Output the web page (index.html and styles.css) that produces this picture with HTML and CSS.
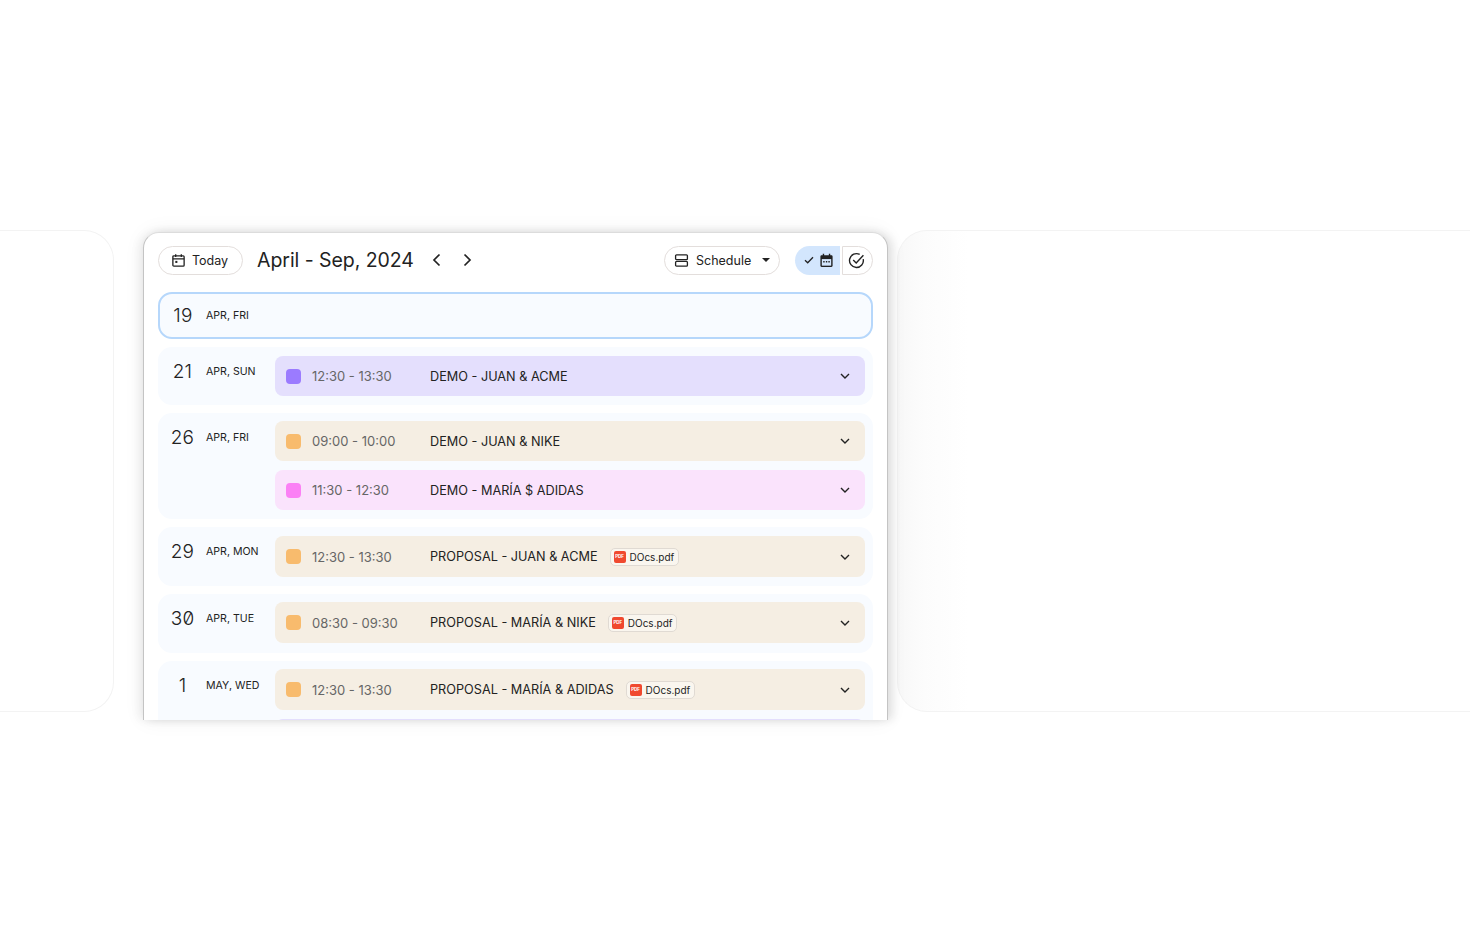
FILE: index.html
```html
<!DOCTYPE html>
<html lang="en">
<head>
<meta charset="utf-8">
<title>Schedule</title>
<link rel="stylesheet" href="styles.css">
</head>
<body>
<main class="stage">
  <div class="side side-left"></div>
  <section class="card">
    <header class="toolbar">
      <button class="pill today">
        <svg class="ico" viewBox="0 0 16 16" fill="none" stroke="#222" stroke-width="1.4"><rect x="2" y="3" width="12" height="11" rx="1"/><path d="M2 6.3h12M5 1.3v3M11 1.3v3"/><rect x="4.6" y="8.4" width="2.2" height="2.2" fill="#222" stroke="none"/></svg>
        Today
      </button>
      <h1 class="range">April - Sep, 2024</h1>
      <div class="nav">
        <svg viewBox="0 0 16 16" fill="none" stroke="#222" stroke-width="1.7"><path d="M10.5 2.5 5 8l5.5 5.5"/></svg>
        <svg viewBox="0 0 16 16" fill="none" stroke="#222" stroke-width="1.7"><path d="M5.5 2.5 11 8l-5.500 5.500"/></svg>
      </div>
      <button class="pill schedule">
        <svg class="ico" viewBox="0 0 16 16" fill="none" stroke="#222" stroke-width="1.4"><rect x="1.700" y="2" width="12.600" height="5" rx="1"/><rect x="1.700" y="9" width="12.600" height="5" rx="1"/></svg>
        Schedule
        <svg class="caret" viewBox="0 0 8 4"><path d="M0 0h8L4 4z" fill="#222"/></svg>
      </button>
      <div class="toggle">
        <span class="toggle-on">
          <svg class="tick" viewBox="0 0 10 8" fill="none" stroke="#222" stroke-width="1.300"><path d="M1 4.200 3.700 6.800 9 1.200"/></svg>
          <svg class="ico" viewBox="0 0 16 16"><path d="M4 .8h1.500v1.700h5V.8H12v1.700h1.200c.7 0 1.300.6 1.300 1.300v9.900c0 .7-.6 1.300-1.300 1.300H2.800c-.7 0-1.300-.6-1.300-1.300V3.800c0-.7.6-1.300 1.300-1.300H4z" fill="#222"/><rect x="3" y="6.500" width="10" height="7" fill="#d3e6fd"/><path d="M4.500 8.500h1.500V10H4.500zM7.300 8.500h1.500V10H7.300zM10 8.500h1.500V10H10z" fill="#222"/></svg>
        </span>
        <span class="toggle-off">
          <svg class="ico big" viewBox="0 0 16 16" fill="none" stroke="#222" stroke-width="1.300"><path d="M14.300 6.700A6.500 6.500 0 1 1 11 2.300"/><path d="M4.900 7.500 7.700 10.300 14.500 3"/></svg>
        </span>
      </div>
    </header>

    <div class="today-row">
      <span class="num">19</span><span class="lbl">APR, FRI</span>
    </div>

    <div class="day">
      <div class="date"><span class="num">21</span><span class="lbl">APR, SUN</span></div>
      <div class="events top9">
        <div class="event violet"><i class="dot"></i><span class="time">12:30 - 13:30</span><span class="name">DEMO - JUAN &amp; ACME</span><svg class="chev" viewBox="0 0 10 6" fill="none" stroke="#222" stroke-width="1.400"><path d="M1 1l4 4 4-4"/></svg></div>
      </div>
    </div>

    <div class="day">
      <div class="date"><span class="num">26</span><span class="lbl">APR, FRI</span></div>
      <div class="events">
        <div class="event sand"><i class="dot"></i><span class="time">09:00 - 10:00</span><span class="name">DEMO - JUAN &amp; NIKE</span><svg class="chev" viewBox="0 0 10 6" fill="none" stroke="#222" stroke-width="1.400"><path d="M1 1l4 4 4-4"/></svg></div>
        <div class="event pink"><i class="dot"></i><span class="time">11:30 - 12:30</span><span class="name">DEMO - MARÍA $ ADIDAS</span><svg class="chev" viewBox="0 0 10 6" fill="none" stroke="#222" stroke-width="1.400"><path d="M1 1l4 4 4-4"/></svg></div>
      </div>
    </div>

    <div class="day">
      <div class="date"><span class="num">29</span><span class="lbl">APR, MON</span></div>
      <div class="events top9">
        <div class="event sand tall"><i class="dot"></i><span class="time">12:30 - 13:30</span><span class="name">PROPOSAL - JUAN &amp; ACME</span><span class="doc"><b class="pdf">PDF</b>DOcs.pdf</span><svg class="chev" viewBox="0 0 10 6" fill="none" stroke="#222" stroke-width="1.400"><path d="M1 1l4 4 4-4"/></svg></div>
      </div>
    </div>

    <div class="day">
      <div class="date"><span class="num zero">30</span><span class="lbl">APR, TUE</span></div>
      <div class="events bottom10">
        <div class="event sand tall"><i class="dot"></i><span class="time">08:30 - 09:30</span><span class="name">PROPOSAL - MARÍA &amp; NIKE</span><span class="doc"><b class="pdf">PDF</b>DOcs.pdf</span><svg class="chev" viewBox="0 0 10 6" fill="none" stroke="#222" stroke-width="1.400"><path d="M1 1l4 4 4-4"/></svg></div>
      </div>
    </div>

    <div class="day">
      <div class="date"><span class="num">1</span><span class="lbl">MAY, WED</span></div>
      <div class="events">
        <div class="event sand tall"><i class="dot"></i><span class="time">12:30 - 13:30</span><span class="name">PROPOSAL - MARÍA &amp; ADIDAS</span><span class="doc"><b class="pdf">PDF</b>DOcs.pdf</span><svg class="chev" viewBox="0 0 10 6" fill="none" stroke="#222" stroke-width="1.400"><path d="M1 1l4 4 4-4"/></svg></div>
        <div class="event violet"></div>
      </div>
    </div>
  </section>
  <div class="side side-right"></div>
</main>
</body>
</html>
```

FILE: styles.css
```css
html, body { margin: 0; padding: 0; background: #fff; overflow: hidden; height: 100%; }
body { font-family: "Inter", "Liberation Sans", sans-serif; color: #222; }
.stage { display: flex; align-items: flex-start; margin: 230px -40px 0 -40px; height: 490px; }
.side { height: 482px; background: #fff; border: 1px solid #f3f3f3; box-sizing: border-box; flex: none; }
.side-left { width: 154px; border-radius: 0 30px 30px 0; border-left: 0; }
.side-right { flex: 1; margin-left: 9px; border-radius: 30px 0 0 30px; border-right: 0; background: linear-gradient(90deg, #f8f8f8, #fcfcfc 26px, #fff 70px); }
.card { flex: none; width: 745px; height: 488px; margin: 2px 0 0 29px; box-sizing: border-box; padding: 0 14px; background: #fff; border: 1px solid #c4c4c4; border-top-color: #dcdcdc; border-bottom: 0; border-radius: 16px 16px 0 0; overflow: hidden; box-shadow: 0 0 22px rgba(0, 0, 0, .06), 5px 0 9px rgba(0, 0, 0, .09), -4px 0 10px rgba(0, 0, 0, .06); position: relative; z-index: 1; }

.toolbar { display: flex; align-items: center; height: 28px; margin-top: 13px; margin-bottom: 18px; }
.pill { display: flex; align-items: center; height: 29px; box-sizing: border-box; background: #fff; border: 1px solid #e3dedc; border-radius: 15px; font: 400 12.500px "Inter", sans-serif; color: #222; padding: 0; }
.ico { width: 15px; height: 15px; flex: none; }
.today { width: 85px; padding-left: 12px; gap: 6px; }
.range { margin: 0 0 0 14px; font-size: 19.500px; font-weight: 400; letter-spacing: -.05px; color: #222; white-space: nowrap; }
.nav { display: flex; gap: 14px; margin-left: 15px; }
.nav svg { width: 16px; height: 16px; }
.schedule { width: 116px; margin-left: auto; padding-left: 9px; gap: 7px; }
.caret { width: 8px; height: 4px; margin-left: 4px; }
.toggle { display: flex; height: 29px; margin-left: 15px; }
.toggle-on { display: flex; align-items: center; width: 45px; box-sizing: border-box; padding-left: 9px; gap: 5px; background: #d3e6fd; border-radius: 15px 0 0 15px; }
.tick { width: 10px; height: 8px; flex: none; }
.toggle-off { display: flex; align-items: center; width: 31px; margin-left: 2px; padding-left: 5px; box-sizing: border-box; border: 1px solid #e3dedc; border-radius: 0 15px 15px 0; }
.big { width: 17px; height: 17px; }

.num { display: block; width: 48px; text-align: center; font-size: 19px; font-weight: 300; letter-spacing: .2px; line-height: 22px; color: #222; flex: none; }
.zero { font-feature-settings: "zero"; }
.lbl { font-size: 10.600px; line-height: 22px; color: #222; white-space: nowrap; }

.today-row { display: flex; align-items: center; height: 47px; box-sizing: border-box; border: 2px solid #b6d7fb; border-radius: 14px; background: #f8fbff; margin-bottom: 8px; }
.today-row .num { margin-left: -1px; }
.today-row .lbl { margin-left: -1px; }
.day { display: flex; background: #f8fbff; border-radius: 14px; padding-right: 8px; margin-bottom: 8px; }
.date { display: flex; width: 117px; flex: none; padding-top: 14px; box-sizing: border-box; align-items: flex-start; }
.date .num { margin-left: 1px; width: 47px; }
.events { flex: 1; display: flex; flex-direction: column; gap: 9px; min-width: 0; padding: 8px 0 9px; }
.top9 { padding-top: 9px; }
.bottom10 { padding-bottom: 10px; }
.event { display: flex; align-items: center; height: 40px; flex: none; border-radius: 8px; padding: 0 15px 0 11px; font-size: 12.700px; white-space: nowrap; }
.tall { height: 41px; }
.violet { background: #e4dffd; }
.sand { background: #f5eee3; }
.pink { background: #fae3fc; }
.dot { width: 15px; height: 15px; border-radius: 4px; margin-right: 11px; flex: none; background: #f8bb6d; }
.violet .dot { background: #9b7bff; }
.pink .dot { background: #fb80f5; }
.time { width: 118px; flex: none; color: #666; font-size: 13px; }
.name { color: #222; }
.chev { width: 10px; height: 6px; margin-left: auto; flex: none; }
.doc { display: flex; align-items: center; gap: 4px; height: 18px; box-sizing: border-box; margin-left: 12px; padding: 0 4px 0 3px; border: 1px solid #e0dad3; border-radius: 5px; background: #faf6ef; font-size: 10px; color: #222; }
.pdf { display: block; width: 12px; height: 12px; border-radius: 2px; background: #f0492f; color: #fff; font-size: 4.500px; line-height: 12px; text-align: center; font-weight: 700; }
```
